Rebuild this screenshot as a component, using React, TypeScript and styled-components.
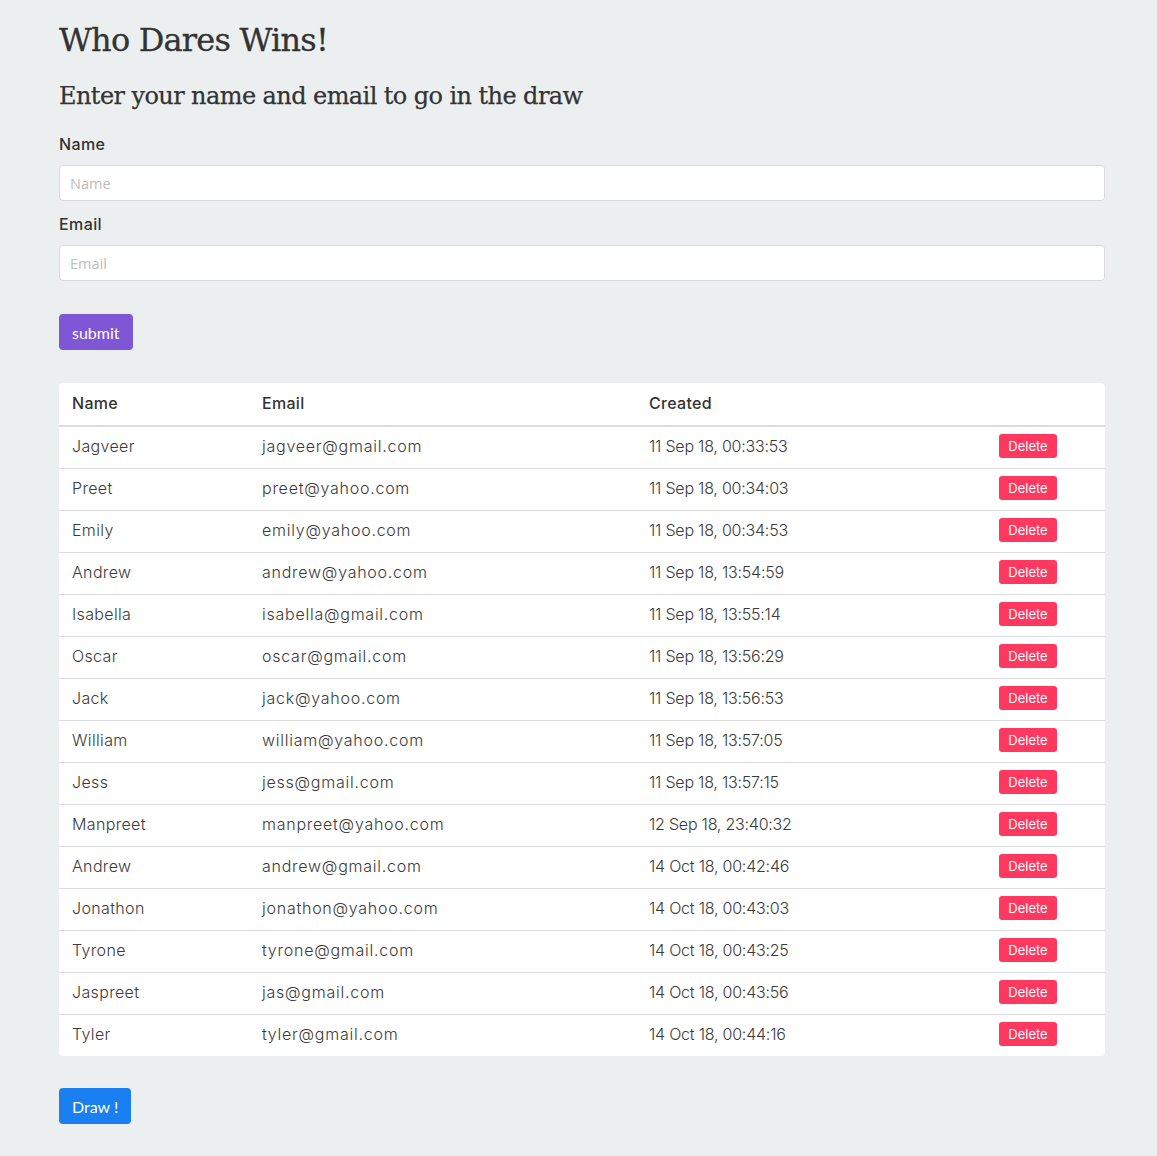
import React from "react";
import styled, { createGlobalStyle } from "styled-components";

const GlobalStyle = createGlobalStyle`
  html, body { margin: 0; padding: 0; background: #ebeff0; }
  body { font-family: "Inter", "Liberation Sans", sans-serif; color: #333; }
`;

const Page = styled.div`
  padding: 0 52px 32px 59px;
  display: flex;
  flex-direction: column;
`;

const Title = styled.h1`
  font-family: "DejaVu Serif", "Liberation Serif", serif;
  font-weight: 400;
  font-size: 32px;
  letter-spacing: -0.8px;
  color: #333;
  -webkit-text-stroke: 0.3px #333;
  margin: 20px 0 0;
  line-height: 40px;
`;

const Subtitle = styled.h2`
  font-family: "DejaVu Serif", "Liberation Serif", serif;
  font-weight: 400;
  font-size: 24px;
  letter-spacing: -0.58px;
  color: #333;
  -webkit-text-stroke: 0.25px #333;
  margin: 19px 0 0;
  line-height: 34px;
`;

const Form = styled.form`
  display: flex;
  flex-direction: column;
  margin-top: 19px;
`;

const Label = styled.label`
  font-family: "Inter", sans-serif;
  font-weight: 500;
  font-size: 16px;
  letter-spacing: 0.4px;
  color: #333;
  line-height: 24px;
  margin-bottom: 9px;
`;

const Input = styled.input`
  box-sizing: border-box;
  height: 36px;
  width: 100%;
  border: 1px solid #dadada;
  border-radius: 4px;
  background: #fff;
  padding: 0 10px;
  font-family: "Open Sans", sans-serif;
  font-size: 14.5px;
  margin-bottom: 11px;
  outline: none;
  &::placeholder { color: #bdbdbd; }
`;

const Button = styled.button<{ $bg: string }>`
  align-self: flex-start;
  background: ${(p) => p.$bg};
  color: #fff;
  border: none;
  border-radius: 4px;
  font-family: "Lato", sans-serif;
  font-size: 16px;
  height: 36px;
  padding: 0 13px;
  cursor: pointer;
`;

const SubmitRow = styled.div`
  margin-top: 22px;
  display: flex;
`;

const Card = styled.div`
  margin-top: 33px;
  background: #fff;
  border-radius: 4px;
  overflow: hidden;
`;

const Table = styled.table`
  width: 100%;
  table-layout: fixed;
  border-collapse: collapse;
  font-family: "Inter", sans-serif;
  font-size: 16px;
  color: #333;
`;

const Th = styled.th<{ $w?: string }>`
  box-sizing: border-box;
  text-align: left;
  font-weight: 500;
  height: 43px;
  padding: 0 13px 2px;
  border-bottom: 2px solid #dcdcdc;
  width: ${(p) => p.$w || "auto"};
  letter-spacing: 0.3px;
`;

const Tr = styled.tr`
  & + & td { border-top: 1px solid #dcdcdc; }
`;

const Td = styled.td<{ $ls?: string }>`
  height: 38px;
  padding: 0 13px 3px;
  font-weight: 300;
  letter-spacing: ${(p) => p.$ls || "0.35px"};
  color: #3a3a3a;
  white-space: nowrap;
`;

const DeleteButton = styled.button`
  background: #ff3860;
  color: #fff;
  border: none;
  border-radius: 3px;
  font-family: "Inter", sans-serif;
  font-size: 13px;
  height: 24px;
  width: 58px;
  padding: 0;
  cursor: pointer;
  vertical-align: middle;
`;

const DrawRow = styled.div`
  margin-top: 32px;
  display: flex;
`;

const rows: [string, string, string][] = [
  ["Jagveer", "jagveer@gmail.com", "11 Sep 18, 00:33:53"],
  ["Preet", "preet@yahoo.com", "11 Sep 18, 00:34:03"],
  ["Emily", "emily@yahoo.com", "11 Sep 18, 00:34:53"],
  ["Andrew", "andrew@yahoo.com", "11 Sep 18, 13:54:59"],
  ["Isabella", "isabella@gmail.com", "11 Sep 18, 13:55:14"],
  ["Oscar", "oscar@gmail.com", "11 Sep 18, 13:56:29"],
  ["Jack", "jack@yahoo.com", "11 Sep 18, 13:56:53"],
  ["William", "william@yahoo.com", "11 Sep 18, 13:57:05"],
  ["Jess", "jess@gmail.com", "11 Sep 18, 13:57:15"],
  ["Manpreet", "manpreet@yahoo.com", "12 Sep 18, 23:40:32"],
  ["Andrew", "andrew@gmail.com", "14 Oct 18, 00:42:46"],
  ["Jonathon", "jonathon@yahoo.com", "14 Oct 18, 00:43:03"],
  ["Tyrone", "tyrone@gmail.com", "14 Oct 18, 00:43:25"],
  ["Jaspreet", "jas@gmail.com", "14 Oct 18, 00:43:56"],
  ["Tyler", "tyler@gmail.com", "14 Oct 18, 00:44:16"],
];

export default function App() {
  return (
    <>
      <GlobalStyle />
      <Page>
        <Title>Who Dares Wins!</Title>
        <Subtitle>Enter your name and email to go in the draw</Subtitle>
        <Form onSubmit={(e) => e.preventDefault()}>
          <Label>Name</Label>
          <Input placeholder="Name" />
          <Label>Email</Label>
          <Input placeholder="Email" />
          <SubmitRow>
            <Button $bg="#7e56d6" type="submit">submit</Button>
          </SubmitRow>
        </Form>
        <Card>
          <Table>
            <thead>
              <tr>
                <Th $w="190px">Name</Th>
                <Th $w="387px">Email</Th>
                <Th $w="350px">Created</Th>
                <Th></Th>
              </tr>
            </thead>
            <tbody>
              {rows.map((r, i) => (
                <Tr key={i}>
                  <Td>{r[0]}</Td>
                  <Td $ls="0.75px">{r[1]}</Td>
                  <Td $ls="-0.22px">{r[2]}</Td>
                  <Td>
                    <DeleteButton>Delete</DeleteButton>
                  </Td>
                </Tr>
              ))}
            </tbody>
          </Table>
        </Card>
        <DrawRow>
          <Button $bg="#1a7ff0">Draw !</Button>
        </DrawRow>
      </Page>
    </>
  );
}
